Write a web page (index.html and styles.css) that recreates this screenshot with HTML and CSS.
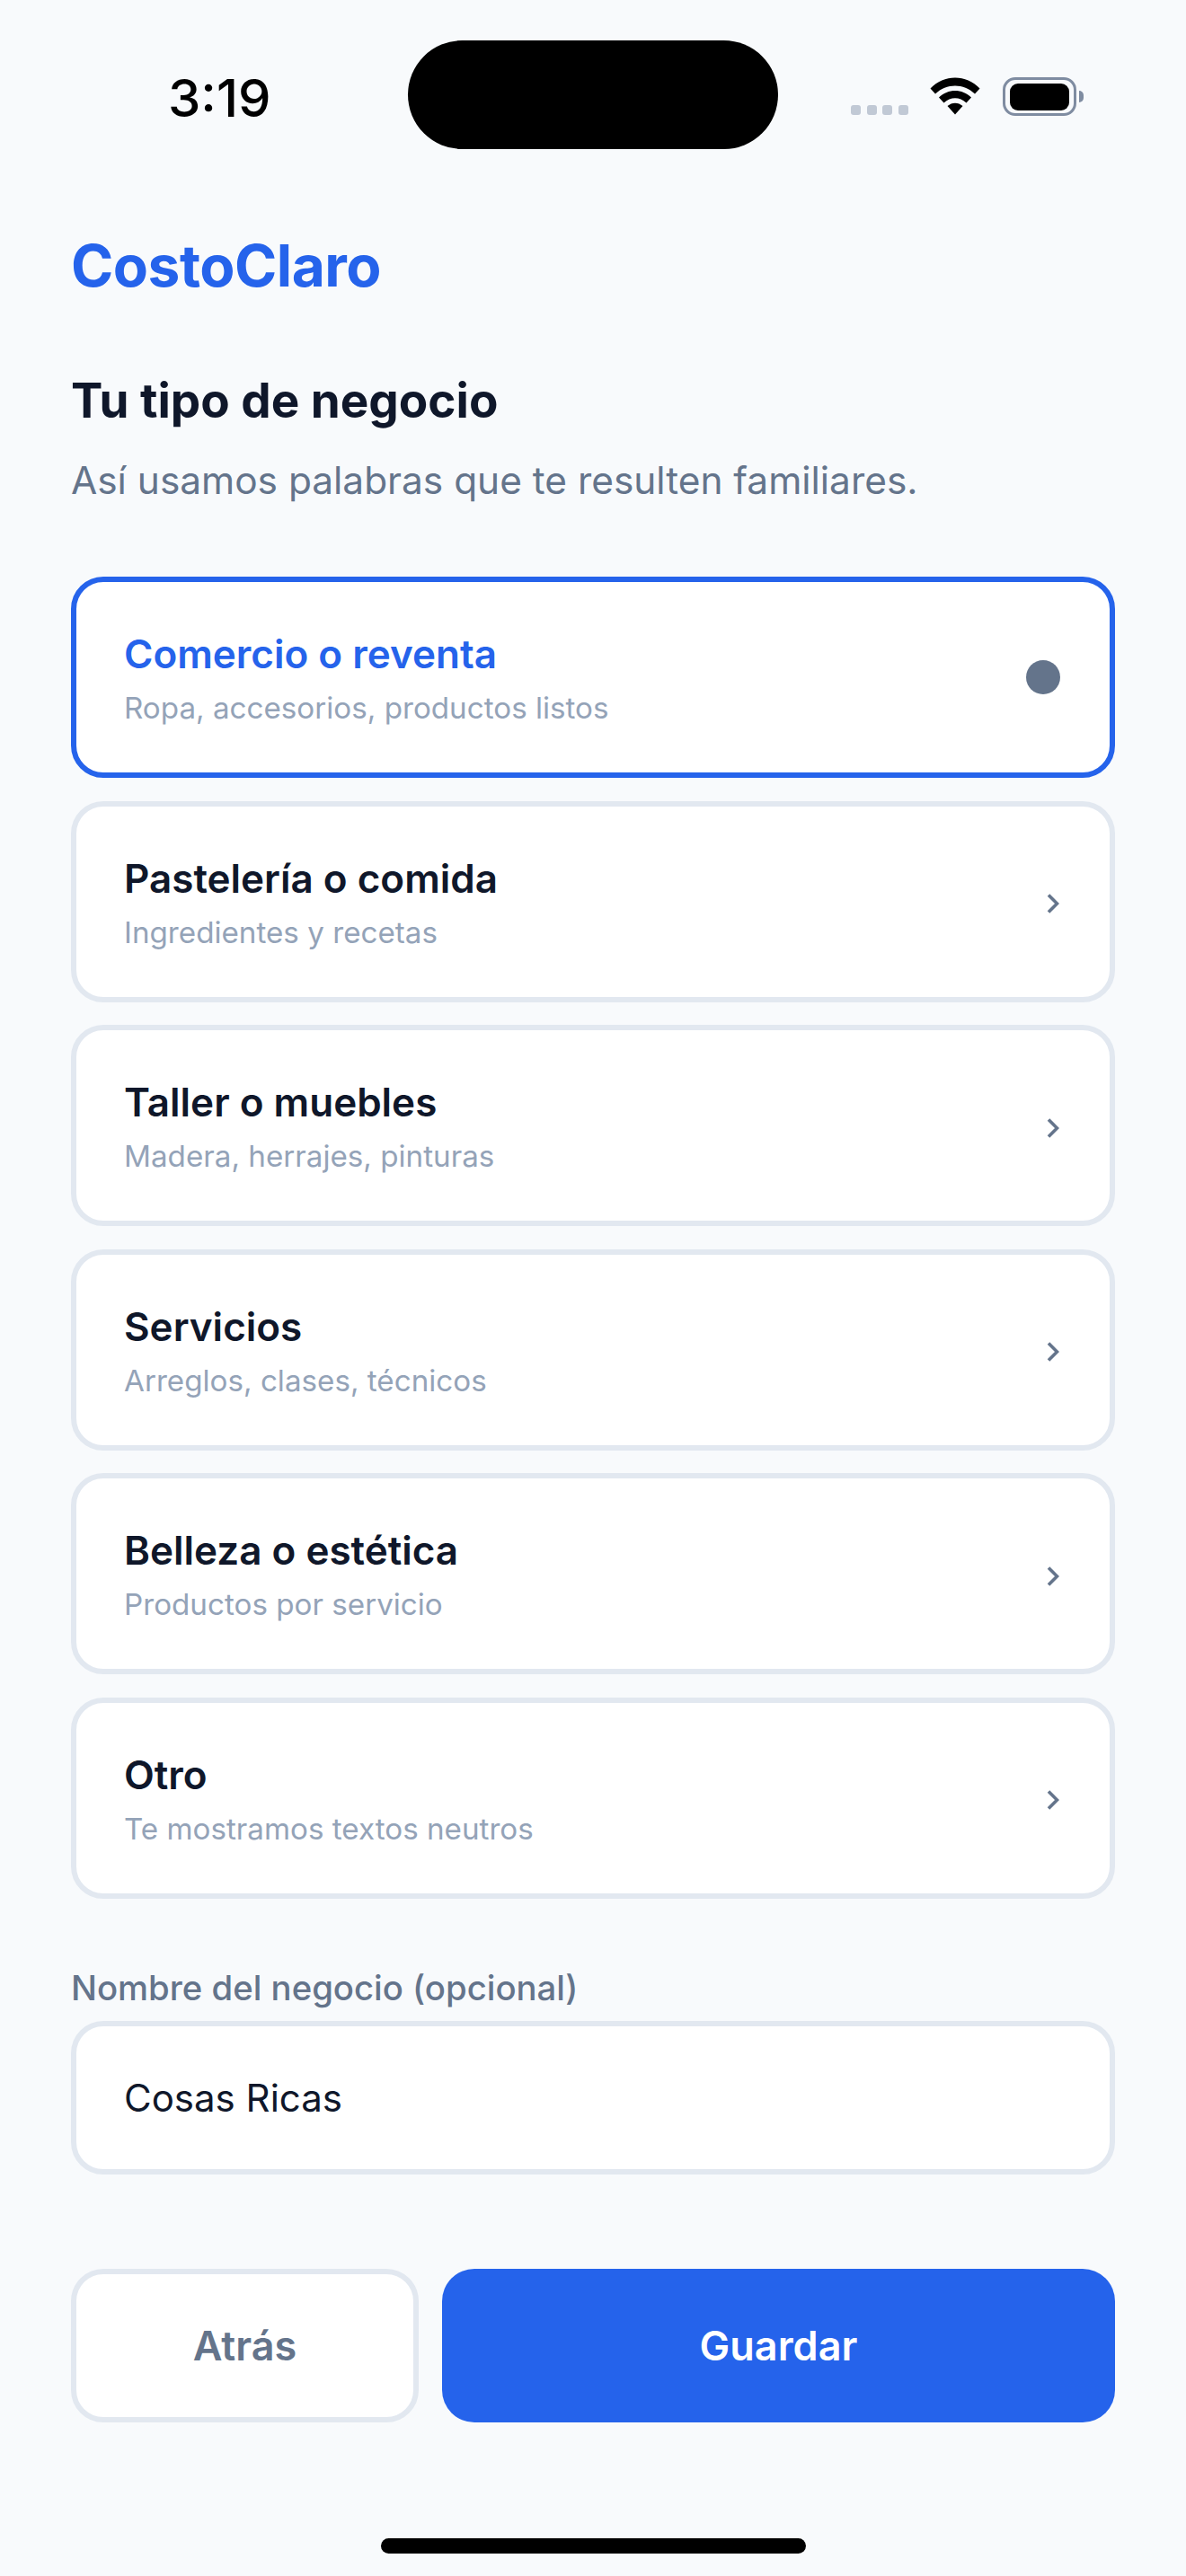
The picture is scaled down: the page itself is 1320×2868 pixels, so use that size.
FILE: index.html
```html
<!DOCTYPE html>
<html lang="es">

<head>
    <meta charset="UTF-8">
    <meta name="viewport" content="width=device-width, initial-scale=1.0">
    <title>CostoClaro</title>
    <link rel="stylesheet" href="styles.css">
</head>

<body>
    <div class="status">
        <span class="status__time">3:19</span>
        <span class="status__island"></span>
        <div class="status__icons">
            <span class="signal"><i></i><i></i><i></i><i></i></span>
            <svg class="wifi" width="56" height="42" viewBox="0 0 56 42">
                <path d="M0.5 12.5C15.5 -3.5 40.5 -3.5 55.5 12.5L50 18.5C37.5 6.5 18.5 6.5 6 18.5Z" />
                <path d="M10 22.5C20 12.5 36 12.5 46 22.5L40.5 28.5C33 21.5 23 21.5 15.5 28.5Z" />
                <path d="M19.5 32C24.5 27.5 31.5 27.5 36.5 32L28 41.5Z" />
            </svg>
            <span class="battery"><span class="battery__fill"></span></span>
        </div>
    </div>

    <main class="screen">
        <div class="brand">CostoClaro</div>
        <h1 class="title">Tu tipo de negocio</h1>
        <p class="subtitle">Así usamos palabras que te resulten familiares.</p>

        <ul class="options">
            <li class="option option--active">
                <div class="option__text">
                    <div class="option__name">Comercio o reventa</div>
                    <div class="option__hint">Ropa, accesorios, productos listos</div>
                </div>
                <span class="option__dot"></span>
            </li>
            <li class="option">
                <div class="option__text">
                    <div class="option__name">Pastelería o comida</div>
                    <div class="option__hint">Ingredientes y recetas</div>
                </div>
                <svg class="option__chevron" width="14" height="22" viewBox="0 0 14 22"><path d="M2 1.5L11.5 11L2 20.5" /></svg>
            </li>
            <li class="option">
                <div class="option__text">
                    <div class="option__name">Taller o muebles</div>
                    <div class="option__hint">Madera, herrajes, pinturas</div>
                </div>
                <svg class="option__chevron" width="14" height="22" viewBox="0 0 14 22"><path d="M2 1.5L11.5 11L2 20.5" /></svg>
            </li>
            <li class="option">
                <div class="option__text">
                    <div class="option__name">Servicios</div>
                    <div class="option__hint">Arreglos, clases, técnicos</div>
                </div>
                <svg class="option__chevron" width="14" height="22" viewBox="0 0 14 22"><path d="M2 1.5L11.5 11L2 20.5" /></svg>
            </li>
            <li class="option">
                <div class="option__text">
                    <div class="option__name">Belleza o estética</div>
                    <div class="option__hint">Productos por servicio</div>
                </div>
                <svg class="option__chevron" width="14" height="22" viewBox="0 0 14 22"><path d="M2 1.5L11.5 11L2 20.5" /></svg>
            </li>
            <li class="option">
                <div class="option__text">
                    <div class="option__name">Otro</div>
                    <div class="option__hint">Te mostramos textos neutros</div>
                </div>
                <svg class="option__chevron" width="14" height="22" viewBox="0 0 14 22"><path d="M2 1.5L11.5 11L2 20.5" /></svg>
            </li>
        </ul>

        <label class="field__label" for="shop">Nombre del negocio (opcional)</label>
        <input class="field__input" id="shop" type="text" value="Cosas Ricas">

        <div class="actions">
            <button class="btn btn--back">Atrás</button>
            <button class="btn btn--save">Guardar</button>
        </div>
    </main>

    <div class="home-bar"></div>
</body>

</html>
```

FILE: styles.css
```css
:root {
    --clr-bg: #f8fafc;
    --clr-blue: #2563eb;
    --clr-dark: #0f172a;
    --clr-muted: #64748b;
    --clr-hint: #94a3b8;
    --clr-line: #e2e8f0;
}

* {
    margin: 0;
    padding: 0;
    box-sizing: border-box;
}

body {
    display: flex;
    flex-direction: column;
    height: 2868px;
    background: var(--clr-bg);
    color: var(--clr-dark);
    font-family: Inter, "Noto Sans", sans-serif;
}

/* status bar */
.status {
    display: flex;
    align-items: flex-start;
    height: 166px;
    padding-top: 45px;
}

.status__time {
    width: 454px;
    padding: 36px 0 0 187px;
    color: #000;
    font-size: 58px;
    font-weight: 500;
    line-height: 56px;
}

.status__island {
    width: 412px;
    height: 121px;
    border-radius: 61px;
    background: #000;
}

.status__icons {
    display: flex;
    align-items: flex-end;
    height: 83px;
    margin-left: 81px;
}

.signal {
    display: flex;
    gap: 6.5px;
    margin-right: 24px;
}

.signal i {
    width: 11px;
    height: 11px;
    border-radius: 3px;
    background: #c1c9d5;
}

.wifi {
    margin-right: 25px;
    fill: #000;
}

.battery {
    position: relative;
    width: 82px;
    height: 43px;
    margin-bottom: -1px;
    padding: 3.5px 5px;
    border: 3px solid #7f8ca1;
    border-radius: 14px;
}

.battery::after {
    content: "";
    position: absolute;
    top: 12px;
    right: -11px;
    width: 5px;
    height: 13px;
    border-radius: 0 5px 5px 0;
    background: #7f8ca1;
}

.battery__fill {
    display: block;
    height: 100%;
    border-radius: 9px;
    background: #000;
}

/* content */
.screen {
    padding: 92px 79px 0;
}

.brand {
    color: var(--clr-blue);
    font-size: 64px;
    font-weight: 700;
    line-height: 76px;
    letter-spacing: -0.5px;
}

.title {
    margin-top: 77px;
    font-size: 53px;
    font-weight: 700;
    line-height: 70px;
}

.subtitle {
    margin-top: 25px;
    color: var(--clr-muted);
    font-size: 42.4px;
    line-height: 58px;
}

.options {
    display: flex;
    flex-direction: column;
    gap: 25.5px;
    margin-top: 78px;
    list-style: none;
}

.option {
    display: flex;
    align-items: center;
    justify-content: space-between;
    height: 224px;
    padding: 0 56px 0 53px;
    border: 6px solid var(--clr-line);
    border-radius: 36px;
    background: #fff;
}

.option--active {
    border-color: var(--clr-blue);
}

.option--active .option__name {
    color: var(--clr-blue);
}

.option__text {
    padding-top: 3px;
}

.option__name {
    font-size: 44px;
    font-weight: 600;
    line-height: 56px;
}

.option__hint {
    margin-top: 9px;
    color: var(--clr-hint);
    font-size: 33.2px;
    line-height: 46px;
}

.option__dot {
    width: 38px;
    height: 38px;
    margin-right: -1px;
    border-radius: 50%;
    background: var(--clr-muted);
}

.option__chevron {
    margin-top: 5px;
    fill: none;
    stroke: var(--clr-muted);
    stroke-width: 3.6;
}

.field__label {
    display: block;
    margin-top: 74px;
    color: var(--clr-muted);
    font-size: 38.3px;
    font-weight: 500;
    line-height: 50px;
}

.field__input {
    display: block;
    width: 100%;
    height: 171px;
    margin-top: 12px;
    padding: 0 53px;
    border: 6px solid var(--clr-line);
    border-radius: 36px;
    outline: none;
    background: #fff;
    color: var(--clr-dark);
    font-family: inherit;
    font-size: 42px;
}

.actions {
    display: flex;
    gap: 26px;
    margin-top: 105px;
}

.btn {
    height: 171px;
    border-radius: 36px;
    font-family: inherit;
    font-size: 45px;
    font-weight: 600;
}

.btn--back {
    width: 387px;
    border: 6px solid var(--clr-line);
    background: #fff;
    color: var(--clr-muted);
}

.btn--save {
    flex: 1;
    border: 0;
    background: var(--clr-blue);
    color: #fff;
}

.home-bar {
    width: 473px;
    height: 17px;
    margin: auto auto 25px;
    border-radius: 9px;
    background: #000;
}
```
